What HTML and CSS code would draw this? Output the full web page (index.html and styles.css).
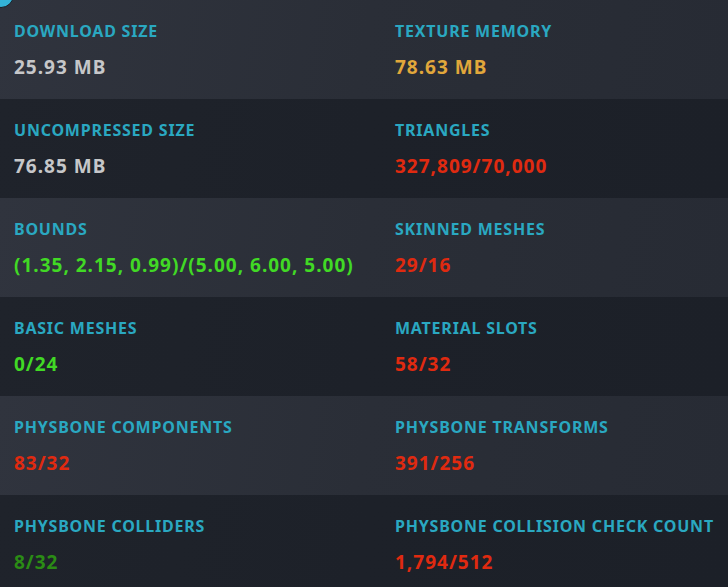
FILE: index.html
```html
<!DOCTYPE html>
<html>
<head>
<meta charset="utf-8">
<link rel="stylesheet" href="styles.css">
</head>
<body>
<div class="badge"></div>
<div class="stats">
  <div class="row light">
    <div class="cell"><div class="label">Download Size</div><div class="value grey">25.93 MB</div></div>
    <div class="cell"><div class="label">Texture Memory</div><div class="value orange">78.63 MB</div></div>
  </div>
  <div class="row dark">
    <div class="cell"><div class="label">Uncompressed Size</div><div class="value grey">76.85 MB</div></div>
    <div class="cell"><div class="label">Triangles</div><div class="value red">327,809/70,000</div></div>
  </div>
  <div class="row light">
    <div class="cell"><div class="label">Bounds</div><div class="value green">(1.35, 2.15, 0.99)/(5.00, 6.00, 5.00)</div></div>
    <div class="cell"><div class="label">Skinned Meshes</div><div class="value red">29/16</div></div>
  </div>
  <div class="row dark">
    <div class="cell"><div class="label">Basic Meshes</div><div class="value green">0/24</div></div>
    <div class="cell"><div class="label">Material Slots</div><div class="value red">58/32</div></div>
  </div>
  <div class="row light">
    <div class="cell"><div class="label">PhysBone Components</div><div class="value red">83/32</div></div>
    <div class="cell"><div class="label">PhysBone Transforms</div><div class="value red">391/256</div></div>
  </div>
  <div class="row dark">
    <div class="cell"><div class="label">PhysBone Colliders</div><div class="value dgreen">8/32</div></div>
    <div class="cell"><div class="label">PhysBone Collision Check Count</div><div class="value red">1,794/512</div></div>
  </div>
</div>
</body>
</html>
```
FILE: styles.css
```css
html, body {
  margin: 0;
  padding: 0;
  background: #1d2129;
  overflow: hidden;
}
body {
  font-family: "Noto Sans", "Open Sans", sans-serif;
  position: relative;
}
.badge {
  position: absolute;
  top: -18px;
  left: -12px;
  width: 24px;
  height: 24px;
  border-radius: 50%;
  background: #33b3d7;
  border: 1px solid #1a1d24;
  z-index: 2;
}
.stats {
  display: flex;
  flex-direction: column;
}
.row {
  display: grid;
  grid-template-columns: 381px 1fr;
  height: 99px;
}
.row.light {
  background: linear-gradient(100deg, #30343e 0%, #2a2e37 50%, #272b34 100%);
}
.row.dark {
  background: linear-gradient(100deg, #1f232b 0%, #1d2129 50%, #1c2028 100%);
}
.cell {
  padding: 20px 0 0 14px;
}
.label {
  font-size: 16px;
  font-weight: 700;
  text-transform: uppercase;
  letter-spacing: 0.78px;
  color: #2aa8c1;
  line-height: 22px;
}
.value {
  margin-top: 13px;
  font-size: 19px;
  font-weight: 700;
  letter-spacing: 1px;
  line-height: 24px;
}
.grey { color: #c6c7c9; }
.orange { color: #e1a73b; }
.red { color: #e02a10; }
.green { color: #41d925; }
.dgreen { color: #2b8c15; }
```
